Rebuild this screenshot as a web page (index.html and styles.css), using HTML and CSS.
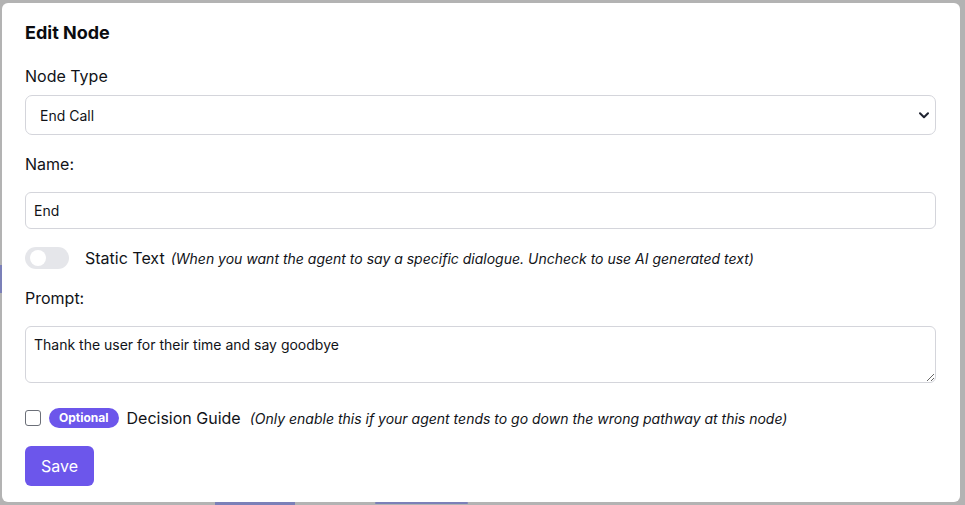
FILE: index.html
```html
<!DOCTYPE html>
<html lang="en">
<head>
<meta charset="utf-8">
<title>Edit Node</title>
<link rel="stylesheet" href="styles.css">
</head>
<body>
<div class="backdrop">
  <div class="bg-bar bg-left"></div>
  <div class="bg-bar bg-bottom-a"></div>
  <div class="bg-bar bg-bottom-b"></div>
</div>
<div class="modal">
  <h2 class="title">Edit Node</h2>
  <label class="label label-type">Node Type</label>
  <div class="select-wrap">
    <select class="select">
      <option>End Call</option>
    </select>
    <svg class="chevron" width="10" height="7" viewBox="0 0 10 7"><path d="M1 1.2 L5 5.2 L9 1.2" fill="none" stroke="#1f2330" stroke-width="2" stroke-linecap="round" stroke-linejoin="round"/></svg>
  </div>
  <label class="label label-gap">Name:</label>
  <input class="input" type="text" value="End">
  <div class="row toggle-row">
    <span class="toggle"><span class="knob"></span></span>
    <span class="row-text">Static Text</span>
    <span class="hint">(When you want the agent to say a specific dialogue. Uncheck to use AI generated text)</span>
  </div>
  <label class="label label-gap">Prompt:</label>
  <textarea class="textarea">Thank the user for their time and say goodbye</textarea>
  <div class="row check-row">
    <span class="checkbox"></span>
    <span class="badge">Optional</span>
    <span class="row-text">Decision Guide</span>
    <span class="hint hint-wide">(Only enable this if your agent tends to go down the wrong pathway at this node)</span>
  </div>
  <button class="save">Save</button>
</div>
</body>
</html>
```

FILE: styles.css
```css
* { box-sizing: border-box; }
html, body {
  margin: 0;
  padding: 0;
  width: 965px;
  height: 505px;
  overflow: hidden;
  background: #b3b3b3;
  font-family: Inter, "Noto Sans", sans-serif;
  color: #111318;
}
.backdrop {
  position: absolute;
  inset: 0;
}
.bg-bar {
  position: absolute;
  background: #7b80b8;
}
.bg-left { left: 0; top: 265px; width: 2px; height: 28px; }
.bg-bottom-a { left: 215px; top: 502px; width: 80px; height: 3px; }
.bg-bottom-b { left: 375px; top: 502px; width: 93px; height: 2px; border-radius: 2px; }

.modal {
  position: absolute;
  left: 2px;
  top: 3px;
  width: 958px;
  height: 499px;
  background: #ffffff;
  border-radius: 6px;
  padding: 16px 24px 16px 23px;
  display: flex;
  flex-direction: column;
  align-items: stretch;
}
.title {
  margin: 0;
  font-size: 18px;
  line-height: 28px;
  font-weight: 700;
  color: #0b0c10;
}
.label {
  display: block;
  font-size: 16px;
  line-height: 24px;
  font-weight: 400;
  color: #111318;
}
.label-type { margin-top: 17px; }
.label-gap { margin-top: 17px; }

.select-wrap {
  position: relative;
  margin-top: 7px;
  height: 40px;
}
.select {
  appearance: none;
  -webkit-appearance: none;
  width: 100%;
  height: 40px;
  border: 1px solid #d4d5db;
  border-radius: 7px;
  background: #fff;
  padding: 0 30px 0 14px;
  font-family: Inter, "Noto Sans", sans-serif;
  font-size: 14px;
  color: #111318;
}
.chevron {
  position: absolute;
  right: 7px;
  top: 17px;
  pointer-events: none;
}
.input {
  margin-top: 16px;
  height: 37px;
  width: 100%;
  border: 1px solid #d4d5db;
  border-radius: 6px;
  padding: 0 8px;
  font-family: Inter, "Noto Sans", sans-serif;
  font-size: 14px;
  color: #111318;
  background: #fff;
}
.row {
  display: flex;
  align-items: center;
}
.toggle-row {
  margin-top: 18px;
  height: 22px;
}
.toggle {
  position: relative;
  display: block;
  width: 44px;
  height: 22px;
  border-radius: 11px;
  background: #e5e6ea;
  flex: none;
}
.knob {
  position: absolute;
  left: 5px;
  top: 3px;
  width: 16px;
  height: 16px;
  border-radius: 50%;
  background: #fff;
}
.row-text {
  font-size: 16px;
  line-height: 24px;
  margin-left: 16px;
  color: #111318;
}
.hint {
  font-size: 14px;
  font-style: italic;
  margin-left: 6px;
  color: #111318;
}
.textarea {
  margin-top: 16px;
  height: 57px;
  width: 100%;
  border: 1px solid #d4d5db;
  border-radius: 6px;
  padding: 8px 8px;
  font-family: Inter, "Noto Sans", sans-serif;
  font-size: 14px;
  line-height: 20px;
  color: #111318;
  resize: vertical;
  background: #fff;
}
.check-row {
  margin-top: 23px;
  height: 24px;
}
.checkbox {
  display: block;
  width: 16px;
  height: 16px;
  border: 1px solid #6b6f78;
  border-radius: 3px;
  background: #fff;
  flex: none;
}
.badge {
  margin-left: 8px;
  height: 20px;
  line-height: 20px;
  padding: 0 10px;
  border-radius: 10px;
  background: #6c56eb;
  color: #fff;
  font-size: 12px;
  font-weight: 700;
}
.check-row .row-text { margin-left: 8px; }
.hint-wide { margin-left: 9px; }
.save {
  margin-top: 16px;
  align-self: flex-start;
  height: 40px;
  padding: 0 16px;
  border: none;
  border-radius: 6px;
  background: #6c56eb;
  color: #fff;
  font-family: Inter, "Noto Sans", sans-serif;
  font-size: 16px;
}
```
